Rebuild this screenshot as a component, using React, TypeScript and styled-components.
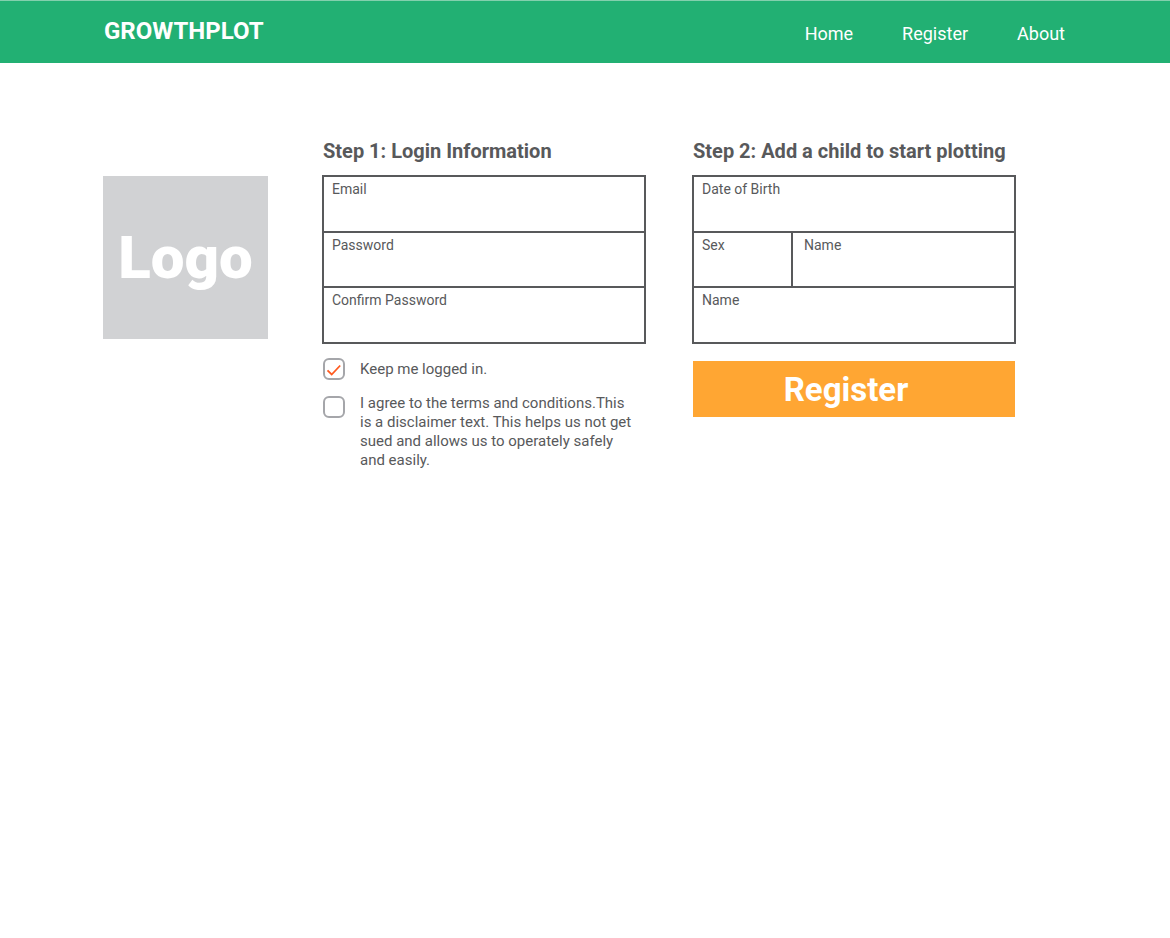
import React, { useId } from 'react';
import styled, { createGlobalStyle } from 'styled-components';

const ink = '#58595b';
const green = '#22b073';

const GlobalStyle = createGlobalStyle`
  *, *::before, *::after { box-sizing: border-box; }
  body {
    margin: 0;
    background: #fff;
    color: ${ink};
    font-family: Roboto, "Liberation Sans", sans-serif;
  }
`;

const Header = styled.header`
  display: flex;
  flex-wrap: wrap;
  align-items: flex-start;
  justify-content: space-between;
  min-height: 63px;
  padding: 16px 105px 12px 104px;
  border-top: 1px solid #83d0ad;
  background: ${green};
  color: #fff;
`;

const Brand = styled.a`
  color: inherit;
  font-size: 24px;
  font-weight: 700;
  line-height: 28px;
  text-decoration: none;
`;

const Nav = styled.nav`
  display: flex;
  gap: 49px;
`;

const NavLink = styled.a`
  color: inherit;
  font-size: 18px;
  line-height: 34px;
  text-decoration: none;
`;

const Main = styled.main`
  display: grid;
  grid-template-columns: 165px minmax(0, 1fr);
  align-items: start;
  gap: 54px;
  padding: 76px 154px 48px 103px;
`;

const Logo = styled.div`
  display: flex;
  align-items: center;
  justify-content: center;
  height: 163px;
  margin-top: 37px;
  background: #d1d2d4;
  color: #fff;
  font-size: 60px;
  font-weight: 900;
`;

const Form = styled.form`
  display: grid;
  grid-template-columns: repeat(2, minmax(0, 1fr));
  align-items: start;
  gap: 46px;
`;

const StepTitle = styled.h2`
  margin: 0 0 12px;
  padding-left: 1px;
  font-size: 20px;
  font-weight: 700;
  line-height: 24px;
  white-space: nowrap;
`;

const FieldGroup = styled.div`
  display: grid;
  grid-auto-rows: 1fr;
  gap: 2px;
  min-height: 169px;
  border: 2px solid ${ink};
  background: ${ink};
`;

const SplitRow = styled.div`
  display: grid;
  grid-template-columns: 97px minmax(0, 1fr);
  gap: 2px;
`;

const FieldBox = styled.div<{ $inset?: number }>`
  display: flex;
  flex-direction: column;
  padding: 4px 8px 0 ${({ $inset = 8 }) => $inset}px;
  background: #fff;
`;

const FieldLabel = styled.label`
  font-size: 14px;
  line-height: 16px;
`;

const TextInput = styled.input`
  flex: 1;
  width: 100%;
  min-height: 0;
  padding: 0;
  border: 0;
  outline-offset: 2px;
  background: transparent;
  color: inherit;
  font: inherit;
`;

const SelectInput = styled.select`
  flex: 1;
  width: 100%;
  min-height: 0;
  padding: 0;
  border: 0;
  appearance: none;
  background: transparent;
  color: inherit;
  font: inherit;
`;

const CheckList = styled.div`
  display: grid;
  gap: 14px;
  margin-top: 14px;
  padding-left: 1px;
`;

const CheckRow = styled.div<{ $multiline?: boolean }>`
  display: flex;
  align-items: ${({ $multiline }) => ($multiline ? 'flex-start' : 'center')};
  gap: 15px;
`;

const CheckFrame = styled.span<{ $multiline?: boolean }>`
  display: grid;
  flex: none;
  width: 22px;
  height: 22px;
  margin-top: ${({ $multiline }) => ($multiline ? 2 : 0)}px;

  > * { grid-area: 1 / 1; }
`;

const Tick = styled.svg`
  width: 22px;
  height: 22px;
  visibility: hidden;
  pointer-events: none;
`;

const CheckInput = styled.input`
  width: 22px;
  height: 22px;
  margin: 0;
  border: 2px solid #a5a6aa;
  border-radius: 6px;
  appearance: none;
  background: #fff;

  &:checked + ${Tick} { visibility: visible; }
`;

const CheckLabel = styled.label`
  max-width: 275px;
  font-size: 15px;
  line-height: 19px;
`;

const SubmitButton = styled.button`
  display: block;
  width: calc(100% - 2px);
  height: 56px;
  margin: 17px 1px 0;
  padding: 0 16px 0 0;
  border: 0;
  background: #ffa633;
  color: #fff;
  font-family: inherit;
  font-size: 33px;
  font-weight: 700;
  cursor: pointer;
`;

function Field({ label, type = 'text', inset }: { label: string; type?: string; inset?: number }) {
  const id = useId();
  return (
    <FieldBox $inset={inset}>
      <FieldLabel htmlFor={id}>{label}</FieldLabel>
      <TextInput id={id} type={type} />
    </FieldBox>
  );
}

function SexField() {
  const id = useId();
  return (
    <FieldBox>
      <FieldLabel htmlFor={id}>Sex</FieldLabel>
      <SelectInput id={id} defaultValue="">
        <option value="" />
        <option value="f" label="F" />
        <option value="m" label="M" />
      </SelectInput>
    </FieldBox>
  );
}

function CheckField({ label, checked, multiline }: { label: string; checked?: boolean; multiline?: boolean }) {
  const id = useId();
  return (
    <CheckRow $multiline={multiline}>
      <CheckFrame $multiline={multiline}>
        <CheckInput id={id} type="checkbox" defaultChecked={checked} />
        <Tick viewBox="0 0 22 22" aria-hidden="true">
          <path d="M4.5 12.4 8.7 16.5 17.2 7.5" fill="none" stroke="#ff5a1f" strokeWidth="1.8" />
        </Tick>
      </CheckFrame>
      <CheckLabel htmlFor={id}>{label}</CheckLabel>
    </CheckRow>
  );
}

export default function App() {
  return (
    <>
      <GlobalStyle />
      <Header>
        <Brand href="#">GROWTHPLOT</Brand>
        <Nav>
          <NavLink href="#home">Home</NavLink>
          <NavLink href="#register">Register</NavLink>
          <NavLink href="#about">About</NavLink>
        </Nav>
      </Header>
      <Main>
        <Logo>Logo</Logo>
        <Form onSubmit={(event) => event.preventDefault()}>
          <section>
            <StepTitle>Step 1: Login Information</StepTitle>
            <FieldGroup>
              <Field label="Email" type="email" />
              <Field label="Password" type="password" />
              <Field label="Confirm Password" type="password" />
            </FieldGroup>
            <CheckList>
              <CheckField label="Keep me logged in." checked />
              <CheckField
                multiline
                label="I agree to the terms and conditions.This is a disclaimer text. This helps us not get sued and allows us to operately safely and easily."
              />
            </CheckList>
          </section>
          <section>
            <StepTitle>Step 2: Add a child to start plotting</StepTitle>
            <FieldGroup>
              <Field label="Date of Birth" />
              <SplitRow>
                <SexField />
                <Field label="Name" inset={11} />
              </SplitRow>
              <Field label="Name" />
            </FieldGroup>
            <SubmitButton type="submit">Register</SubmitButton>
          </section>
        </Form>
      </Main>
    </>
  );
}
